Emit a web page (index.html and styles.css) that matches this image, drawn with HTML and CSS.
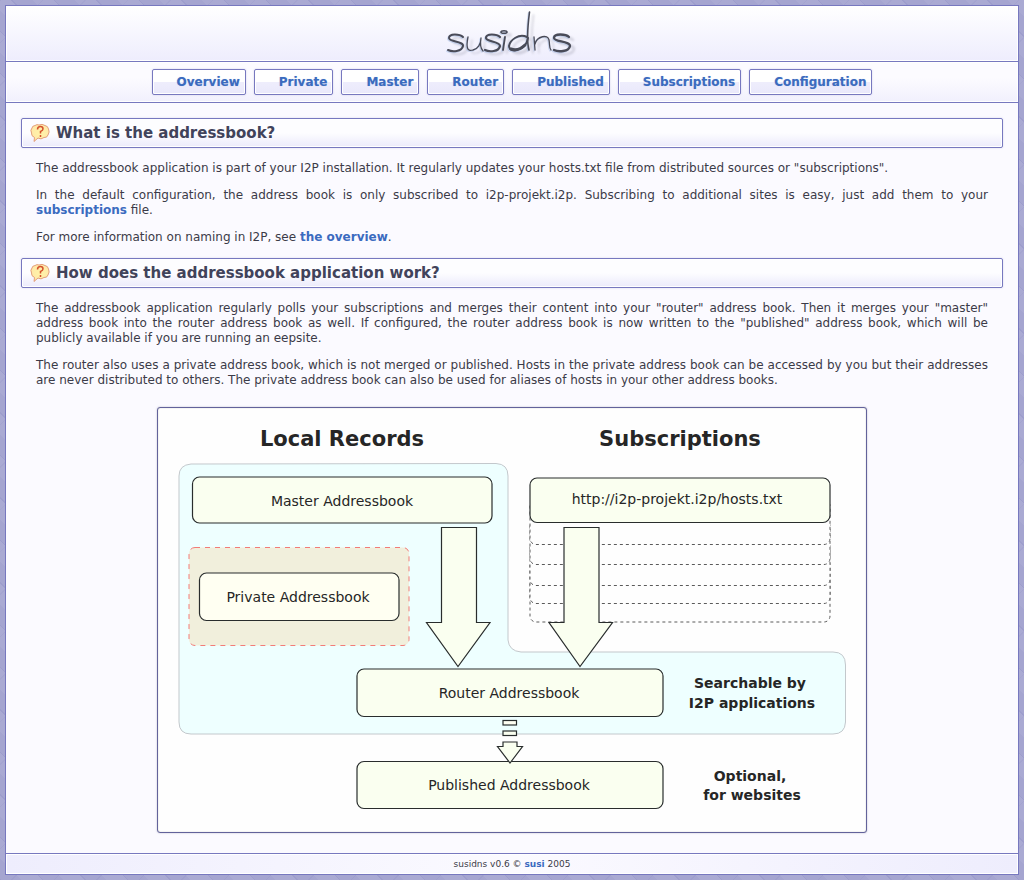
FILE: index.html
```html
<!DOCTYPE html>
<html lang="en">
<head>
<meta charset="utf-8">
<title>susidns</title>
<link rel="stylesheet" href="styles.css">
</head>
<body>
<div class="page">
  <header class="logo">
    <svg class="logo-art" viewBox="0 0 134 48" width="134" height="48" role="img" aria-label="susidns">
      <defs>
        <g id="wordmark" fill="none" stroke-linecap="round" stroke-linejoin="round">
          <path stroke-width="2" d="M18 27C15 24 4 23 4 28C4 32 19 31 18 36C17 42 7 42 3 40"/>
          <path stroke-width="1.300" d="M23 27C21 37 22 42 28 40C33 39 36 34 36 28C35 34 36 39 38 41"/>
          <path stroke-width="2.200" d="M55 27C52 24 41 23 41 28C41 32 55 31 55 36C54 42 44 42 40 40"/>
          <path stroke-width="1.800" d="M60 27L58 40"/>
          <ellipse stroke-width="1.600" cx="59" cy="22" rx="3" ry="1.300"/>
          <path stroke-width="2" d="M82 27C74 23 65 30 64 36C64 40 68 41 72 40C78 39 82 34 83 28"/>
          <path stroke-width="1.600" d="M84.500 2C83 14 81 30 84 40"/>
          <path stroke-width="3" d="M66 39C72 41 77 38 80 35"/>
          <path stroke-width="1.300" d="M89 27L90 40M90 34C92 26 103 24 104 30C105 35 104 38 106 40"/>
          <path stroke-width="2.300" d="M124 27C121 24 109 23 109 28C109 32 125 31 125 36C124 42 113 42 109 40"/>
        </g>
      </defs>
      <use href="#wordmark" class="mark-shadow" x="4" y="3"/>
      <use href="#wordmark" class="mark-glow"/>
      <use href="#wordmark" class="mark-ink"/>
    </svg>
  </header>
  <nav class="nav">
    <a href="#overview">Overview</a>
    <a href="#private">Private</a>
    <a href="#master">Master</a>
    <a href="#router">Router</a>
    <a href="#published">Published</a>
    <a href="#subscriptions">Subscriptions</a>
    <a href="#configuration">Configuration</a>
  </nav>
  <main class="content">
    <h3 class="heading">
      <svg class="bubble" viewBox="0 0 20 20" width="20" height="20" aria-hidden="true">
        <defs><radialGradient id="amber"><stop offset="0" stop-color="#fff3a8"/><stop offset="1" stop-color="#ffe9a8"/></radialGradient></defs>
        <path fill="url(#amber)" stroke="#dc8a68" stroke-width=".8" d="M5 2.500Q7 1 9 2Q12 .5 15 2.500Q18 3 18.500 6Q20 9 18 12Q17 15 14 14.500Q11 17 8 15L4 18.500L4.500 14.500Q1 13 1.500 10Q0 7 2 5Q2 3 5 2.500Z"/>
        <path fill="none" stroke="#d4512d" stroke-width="1.500" d="M7.500 6.500Q7.500 3.500 10.500 3.500Q13 3.500 13 6Q13 7.500 10.500 8.500V10.500M10.500 12V14"/>
      </svg>
      What is the addressbook?
    </h3>
    <p>The addressbook application is part of your I2P installation. It regularly updates your hosts.txt file from distributed sources or "subscriptions".</p>
    <p>In the default configuration, the address book is only subscribed to i2p-projekt.i2p. Subscribing to additional sites is easy, just add them to your <a href="#subscriptions">subscriptions</a> file.</p>
    <p>For more information on naming in I2P, see <a href="#naming">the overview</a>.</p>
    <h3 class="heading">
      <svg class="bubble" viewBox="0 0 20 20" width="20" height="20" aria-hidden="true">
        <path fill="url(#amber)" stroke="#dc8a68" stroke-width=".8" d="M5 2.500Q7 1 9 2Q12 .5 15 2.500Q18 3 18.500 6Q20 9 18 12Q17 15 14 14.500Q11 17 8 15L4 18.500L4.500 14.500Q1 13 1.500 10Q0 7 2 5Q2 3 5 2.500Z"/>
        <path fill="none" stroke="#d4512d" stroke-width="1.500" d="M7.500 6.500Q7.500 3.500 10.500 3.500Q13 3.500 13 6Q13 7.500 10.500 8.500V10.500M10.500 12V14"/>
      </svg>
      How does the addressbook application work?
    </h3>
    <p>The addressbook application regularly polls your subscriptions and merges their content into your "router" address book. Then it merges your "master" address book into the router address book as well. If configured, the router address book is now written to the "published" address book, which will be publicly available if you are running an eepsite.</p>
    <p>The router also uses a private address book, which is not merged or published. Hosts in the private address book can be accessed by you but their addresses are never distributed to others. The private address book can also be used for aliases of hosts in your other address books.</p>
    <svg class="diagram" viewBox="158 408 708 424" role="img" aria-label="How the address books are merged">
      <path class="zone" d="M191 464L496 463.500Q508 464 508 476V640Q509 651 521 652H833Q845.500 652 845.500 665V722Q845 734 833 734H191Q179 734 179 722V476Q179 465 191 464Z"/>
      <rect class="private-zone" x="189" y="547.500" width="220" height="98" rx="6"/>
      <g class="stack">
        <rect x="530" y="577" width="300" height="45" rx="6"/>
        <rect x="530" y="559" width="300" height="44.500" rx="6"/>
        <rect x="530" y="541" width="300" height="44.500" rx="6"/>
        <rect x="530" y="520" width="300" height="44.500" rx="6"/>
        <rect x="530" y="500" width="300" height="44.500" rx="6"/>
      </g>
      <g class="box">
        <rect x="192.500" y="477" width="299.500" height="46" rx="7"/>
        <rect class="cream" x="199.500" y="573" width="199.500" height="47.500" rx="7"/>
        <rect x="530" y="478" width="300" height="44.500" rx="7"/>
        <rect x="357" y="669" width="306" height="47.500" rx="7"/>
        <rect x="357" y="761.500" width="306" height="47" rx="7"/>
        <path d="M441.500 527.500H476.500V622.500H490L458 666.500L426.500 622.500H441.500Z"/>
        <path d="M564 527.500H599V622.500H612.500L580 666.500L549 622.500H564Z"/>
        <rect class="cream" x="503" y="720.500" width="13.500" height="4.500"/>
        <rect x="503" y="731" width="13.500" height="4.500"/>
        <path d="M503 742H517V746.500H522.500L510 763L497.500 746.500H503Z"/>
      </g>
      <g class="title">
        <text x="342" y="446">Local Records</text>
        <text x="680" y="446">Subscriptions</text>
      </g>
      <g class="label">
        <text x="342" y="506">Master Addressbook</text>
        <text x="298" y="602">Private Addressbook</text>
        <text x="677" y="504">http://i2p-projekt.i2p/hosts.txt</text>
        <text x="509" y="698">Router Addressbook</text>
        <text x="509" y="790">Published Addressbook</text>
      </g>
      <g class="label note">
        <text x="750" y="688">Searchable by</text>
        <text x="752" y="708">I2P applications</text>
        <text x="750" y="781">Optional,</text>
        <text x="752" y="800">for websites</text>
      </g>
    </svg>
  </main>
  <footer class="footer">susidns v0.6 © <a href="#susi">susi</a> 2005</footer>
</div>
</body>
</html>
```
FILE: styles.css
```css
* { box-sizing: border-box; }

body {
  margin: 0;
  padding: 5px;
  background:
    repeating-linear-gradient(45deg, rgba(110, 110, 180, .13) 0 1px, transparent 1px 15px, rgba(255, 255, 255, .06) 15px 30px),
    repeating-linear-gradient(135deg, rgba(110, 110, 180, .1) 0 1px, transparent 1px 30px),
    #a5a5d0;
  color: #3b3b48;
  font: 12px/15px "DejaVu Sans", sans-serif;
}

a {
  color: #3b6bbf;
  font-weight: bold;
  text-decoration: none;
}

.page {
  display: flex;
  flex-direction: column;
  min-height: calc(100vh - 10px);
  border: 1px solid #7778bf;
  background: #fbfaff;
}

.logo {
  display: flex;
  justify-content: center;
  padding: 4px 0 3px;
  border-bottom: 1px solid #7778bf;
  background: linear-gradient(#fff, #eeedfd);
  box-shadow: inset 0 0 0 1px #fff;
}

.logo-art { overflow: visible; }
.mark-ink { stroke: #494b58; }
.mark-glow { stroke: #a5bce4; opacity: .5; transform: translate(-1px, 1px); }
.mark-shadow { stroke: #9b9bab; opacity: .4; filter: blur(1px); }

.nav {
  display: flex;
  flex-wrap: wrap;
  justify-content: center;
  gap: 8px;
  padding: 7px;
  border-bottom: 1px solid #7778bf;
  background: linear-gradient(#fcfbff 0 40%, #f1f0fd);
  box-shadow: inset 0 0 0 1px #fff;
}

.nav a {
  padding: 5px 5px 4px 24px;
  border: 1px solid #7778bf;
  border-radius: 2px;
  background: linear-gradient(#fff 0 48%, #eeedfc 52%, #e9e8fb);
  box-shadow: inset 0 0 0 1px #fff, 0 0 2px #cfcfe8;
  text-shadow: 0 0 1px #b7c6e5;
}

.content {
  flex: 1;
  padding: 15px 15px 20px;
}

.heading {
  display: flex;
  align-items: center;
  gap: 6px;
  height: 30px;
  margin: 0;
  padding: 0 8px;
  border: 1px solid #7778bf;
  border-radius: 2px;
  background: linear-gradient(#fdfdff 0 50%, #ebeafb);
  box-shadow: inset 0 0 0 1px #fff, 0 0 2px #d4d4ea;
  color: #41435b;
  font-size: 15px;
  line-height: 20px;
}

.content p {
  margin: 12px 15px;
  text-align: justify;
}

.content .heading + p { margin-top: 13px; }

.content p + .heading { margin-top: 13px; }

.diagram {
  display: block;
  width: 710px;
  max-width: 100%;
  margin: 19px auto 0;
  border: 1px solid #62629b;
  border-radius: 3px;
  background: #fefefe;
  box-shadow: inset 0 0 1px #999, 0 0 2px #b9b9ca;
}

.zone { fill: #eff; stroke: #c3c8cc; }
.private-zone { fill: #f1efdc; stroke: #f27c78; stroke-dasharray: 5 5; }
.stack { fill: #fefefe; stroke: #5b5b5b; stroke-dasharray: 3 3; }
.box { fill: #fafff0; stroke: #292d2d; stroke-width: 1.2; }
.cream { fill: #fffff2; }
.title, .label { fill: #262626; text-anchor: middle; }
.title { font-size: 21px; font-weight: bold; }
.label { font-size: 14px; }
.note { font-weight: bold; }

.footer {
  padding: 3px;
  border-top: 1px solid #7778bf;
  background: linear-gradient(90deg, #eeedfd, #fbfaff 50%, #eeedfd);
  box-shadow: inset 0 0 0 1px #fff;
  font-size: 9px;
  line-height: 14px;
  text-align: center;
}
```
